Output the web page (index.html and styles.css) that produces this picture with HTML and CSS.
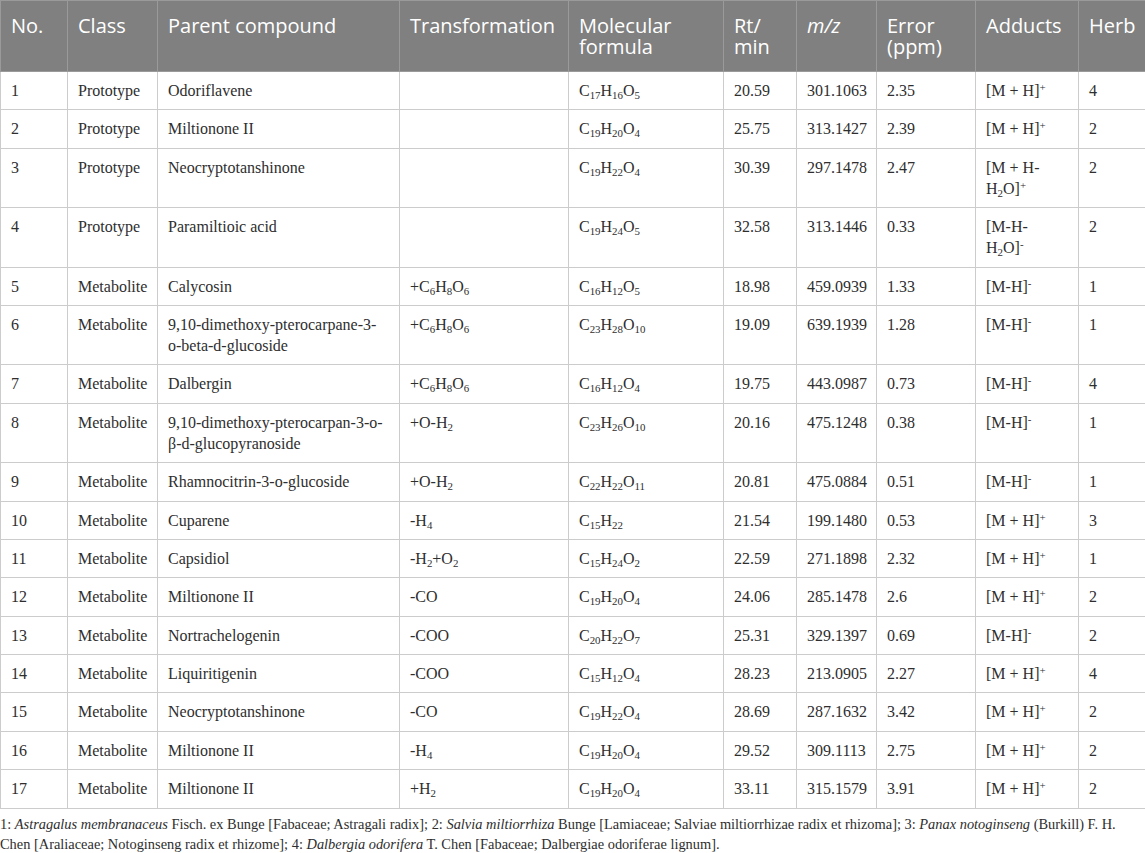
FILE: index.html
```html
<!DOCTYPE html>
<html>
<head>
<meta charset="utf-8">
<link rel="stylesheet" href="styles.css">
</head>
<body>
<table class="data">
<colgroup>
<col class="c-no"><col class="c-class"><col class="c-parent"><col class="c-trans"><col class="c-formula"><col class="c-rt"><col class="c-mz"><col class="c-err"><col class="c-add"><col class="c-herb">
</colgroup>
<thead>
<tr><th>No.</th><th>Class</th><th>Parent compound</th><th>Transformation</th><th>Molecular formula</th><th>Rt/ min</th><th><i>m/z</i></th><th>Error (ppm)</th><th>Adducts</th><th>Herb</th></tr>
</thead>
<tbody>
<tr><td>1</td><td>Prototype</td><td>Odoriflavene</td><td></td><td>C<sub>17</sub>H<sub>16</sub>O<sub>5</sub></td><td>20.59</td><td>301.1063</td><td>2.35</td><td>[M + H]<sup>+</sup></td><td>4</td></tr>
<tr><td>2</td><td>Prototype</td><td>Miltionone II</td><td></td><td>C<sub>19</sub>H<sub>20</sub>O<sub>4</sub></td><td>25.75</td><td>313.1427</td><td>2.39</td><td>[M + H]<sup>+</sup></td><td>2</td></tr>
<tr><td>3</td><td>Prototype</td><td>Neocryptotanshinone</td><td></td><td>C<sub>19</sub>H<sub>22</sub>O<sub>4</sub></td><td>30.39</td><td>297.1478</td><td>2.47</td><td>[M + H-<br>H<sub>2</sub>O]<sup>+</sup></td><td>2</td></tr>
<tr><td>4</td><td>Prototype</td><td>Paramiltioic acid</td><td></td><td>C<sub>19</sub>H<sub>24</sub>O<sub>5</sub></td><td>32.58</td><td>313.1446</td><td>0.33</td><td>[M-H-<br>H<sub>2</sub>O]<sup>-</sup></td><td>2</td></tr>
<tr><td>5</td><td>Metabolite</td><td>Calycosin</td><td>+C<sub>6</sub>H<sub>8</sub>O<sub>6</sub></td><td>C<sub>16</sub>H<sub>12</sub>O<sub>5</sub></td><td>18.98</td><td>459.0939</td><td>1.33</td><td>[M-H]<sup>-</sup></td><td>1</td></tr>
<tr><td>6</td><td>Metabolite</td><td>9,10-dimethoxy-pterocarpane-3-<br>o-beta-d-glucoside</td><td>+C<sub>6</sub>H<sub>8</sub>O<sub>6</sub></td><td>C<sub>23</sub>H<sub>28</sub>O<sub>10</sub></td><td>19.09</td><td>639.1939</td><td>1.28</td><td>[M-H]<sup>-</sup></td><td>1</td></tr>
<tr><td>7</td><td>Metabolite</td><td>Dalbergin</td><td>+C<sub>6</sub>H<sub>8</sub>O<sub>6</sub></td><td>C<sub>16</sub>H<sub>12</sub>O<sub>4</sub></td><td>19.75</td><td>443.0987</td><td>0.73</td><td>[M-H]<sup>-</sup></td><td>4</td></tr>
<tr><td>8</td><td>Metabolite</td><td>9,10-dimethoxy-pterocarpan-3-o-<br>β-d-glucopyranoside</td><td>+O-H<sub>2</sub></td><td>C<sub>23</sub>H<sub>26</sub>O<sub>10</sub></td><td>20.16</td><td>475.1248</td><td>0.38</td><td>[M-H]<sup>-</sup></td><td>1</td></tr>
<tr><td>9</td><td>Metabolite</td><td>Rhamnocitrin-3-o-glucoside</td><td>+O-H<sub>2</sub></td><td>C<sub>22</sub>H<sub>22</sub>O<sub>11</sub></td><td>20.81</td><td>475.0884</td><td>0.51</td><td>[M-H]<sup>-</sup></td><td>1</td></tr>
<tr><td>10</td><td>Metabolite</td><td>Cuparene</td><td>-H<sub>4</sub></td><td>C<sub>15</sub>H<sub>22</sub></td><td>21.54</td><td>199.1480</td><td>0.53</td><td>[M + H]<sup>+</sup></td><td>3</td></tr>
<tr><td>11</td><td>Metabolite</td><td>Capsidiol</td><td>-H<sub>2</sub>+O<sub>2</sub></td><td>C<sub>15</sub>H<sub>24</sub>O<sub>2</sub></td><td>22.59</td><td>271.1898</td><td>2.32</td><td>[M + H]<sup>+</sup></td><td>1</td></tr>
<tr><td>12</td><td>Metabolite</td><td>Miltionone II</td><td>-CO</td><td>C<sub>19</sub>H<sub>20</sub>O<sub>4</sub></td><td>24.06</td><td>285.1478</td><td>2.6</td><td>[M + H]<sup>+</sup></td><td>2</td></tr>
<tr><td>13</td><td>Metabolite</td><td>Nortrachelogenin</td><td>-COO</td><td>C<sub>20</sub>H<sub>22</sub>O<sub>7</sub></td><td>25.31</td><td>329.1397</td><td>0.69</td><td>[M-H]<sup>-</sup></td><td>2</td></tr>
<tr><td>14</td><td>Metabolite</td><td>Liquiritigenin</td><td>-COO</td><td>C<sub>15</sub>H<sub>12</sub>O<sub>4</sub></td><td>28.23</td><td>213.0905</td><td>2.27</td><td>[M + H]<sup>+</sup></td><td>4</td></tr>
<tr><td>15</td><td>Metabolite</td><td>Neocryptotanshinone</td><td>-CO</td><td>C<sub>19</sub>H<sub>22</sub>O<sub>4</sub></td><td>28.69</td><td>287.1632</td><td>3.42</td><td>[M + H]<sup>+</sup></td><td>2</td></tr>
<tr><td>16</td><td>Metabolite</td><td>Miltionone II</td><td>-H<sub>4</sub></td><td>C<sub>19</sub>H<sub>20</sub>O<sub>4</sub></td><td>29.52</td><td>309.1113</td><td>2.75</td><td>[M + H]<sup>+</sup></td><td>2</td></tr>
<tr><td>17</td><td>Metabolite</td><td>Miltionone II</td><td>+H<sub>2</sub></td><td>C<sub>19</sub>H<sub>20</sub>O<sub>4</sub></td><td>33.11</td><td>315.1579</td><td>3.91</td><td>[M + H]<sup>+</sup></td><td>2</td></tr>
</tbody>
</table>
<p class="note">1: <i>Astragalus membranaceus</i> Fisch. ex Bunge [Fabaceae; Astragali radix]; 2: <i>Salvia miltiorrhiza</i> Bunge [Lamiaceae; Salviae miltiorrhizae radix et rhizoma]; 3: <i>Panax notoginseng</i> (Burkill) F. H. Chen [Araliaceae; Notoginseng radix et rhizome]; 4: <i>Dalbergia odorifera</i> T. Chen [Fabaceae; Dalbergiae odoriferae lignum].</p>
</body>
</html>
```

FILE: styles.css
```css
html, body {
  margin: 0;
  padding: 0;
  background: #ffffff;
}

.data {
  width: 1145px;
  border-collapse: collapse;
  table-layout: fixed;
}

.c-no { width: 67px; }
.c-class { width: 90px; }
.c-parent { width: 242px; }
.c-trans { width: 169px; }
.c-formula { width: 155px; }
.c-rt { width: 73px; }
.c-mz { width: 80px; }
.c-err { width: 99px; }
.c-add { width: 103px; }
.c-herb { width: 67px; }

.data th {
  background: #808080;
  color: #ffffff;
  font-family: "Open Sans", "Noto Sans", sans-serif;
  font-size: 20px;
  font-weight: normal;
  line-height: 21.5px;
  text-align: left;
  vertical-align: top;
  padding: 13.5px 10px 13.5px 10px;
  border: 1px solid #9a9a9a;
}

.data td {
  font-family: "Liberation Serif", serif;
  font-size: 16px;
  line-height: 21px;
  color: #2e2e2e;
  text-align: left;
  vertical-align: top;
  padding: 8px 10px 8.4px 10px;
  border: 1px solid #cccccc;
}

.data sub, .data sup {
  font-size: 0.68em;
  line-height: 0;
}

.data sub {
  vertical-align: -0.28em;
}

.data sup {
  vertical-align: 0.5em;
}

.note {
  margin: 5px 0 0 0;
  max-width: 1136px;
  font-family: "Liberation Serif", serif;
  font-size: 14.4px;
  line-height: 20px;
  color: #2e2e2e;
}
```
